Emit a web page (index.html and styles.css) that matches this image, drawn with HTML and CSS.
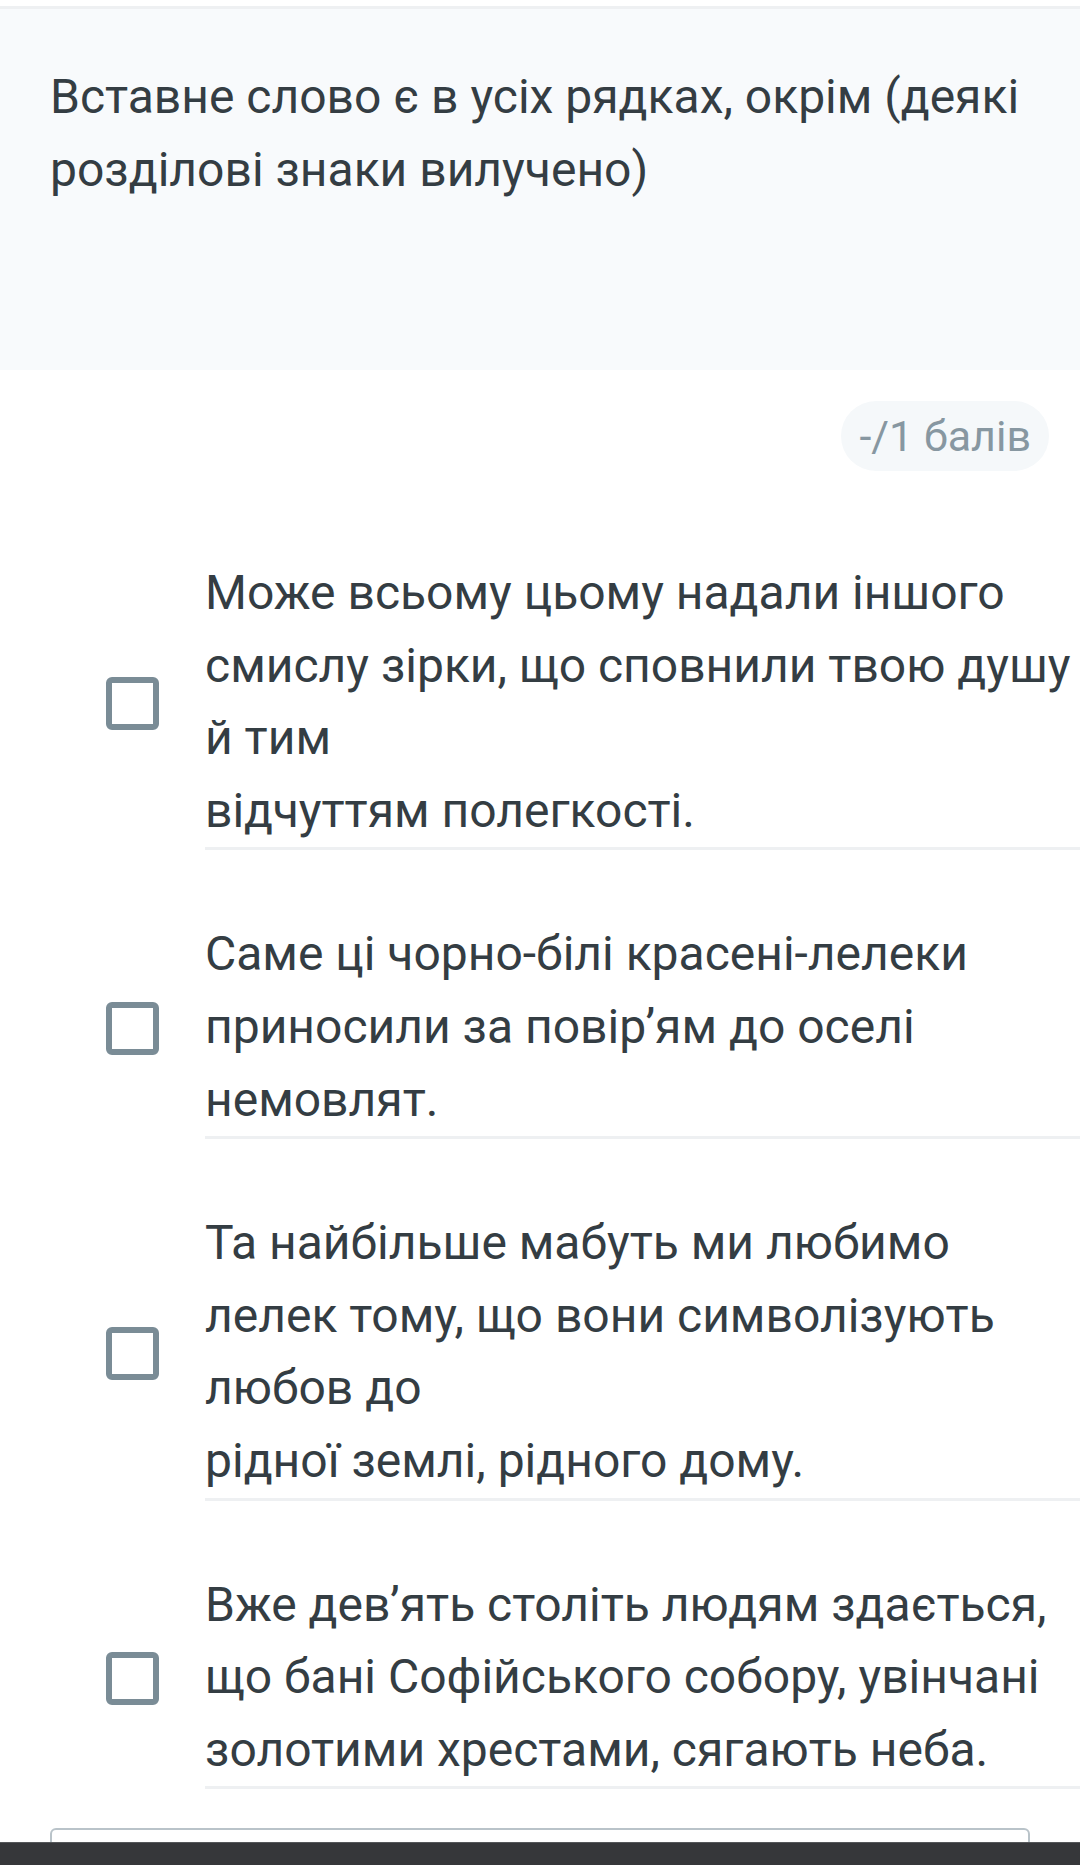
FILE: index.html
```html
<!DOCTYPE html>
<html lang="uk">
<head>
    <meta charset="UTF-8">
    <meta name="viewport" content="width=device-width, initial-scale=1.0">
    <title>Питання</title>
    <link rel="stylesheet" href="styles.css">
</head>
<body>

<!-- Question header -->
<section class="question-head">
    <p class="question-text">Вставне слово є в усіх рядках, окрім (деякі розділові знаки вилучено)</p>
</section>

<div class="points-row">
    <span class="points">-/1 балів</span>
</div>

<!-- Options -->
<ul class="options">
    <li class="option">
        <span class="check"></span>
        <div class="option-text">Може всьому цьому надали іншого смислу зірки, що сповнили твою душу й тим<br>відчуттям полегкості.</div>
    </li>
    <li class="option">
        <span class="check"></span>
        <div class="option-text">Саме ці чорно-білі красені-лелеки приносили за повір’ям до оселі немовлят.</div>
    </li>
    <li class="option">
        <span class="check"></span>
        <div class="option-text">Та найбільше мабуть ми любимо лелек тому, що вони символізують любов до<br>рідної землі, рідного дому.</div>
    </li>
    <li class="option">
        <span class="check"></span>
        <div class="option-text">Вже дев’ять століть людям здається, що бані Софійського собору, увінчані золотими хрестами, сягають неба.</div>
    </li>
</ul>

<div class="answer-box"></div>

<div class="bottom-bar"></div>

</body>
</html>
```

FILE: styles.css
```css
/* Basic Styling */
html, body {
    overflow-x: hidden;
}
body {
    font-family: Roboto, "Noto Sans", Arial, sans-serif;
    background-color: #fff;
    color: #343d43;
    margin: 0;
    padding: 0;
    height: 1865px;
    position: relative;
}
.question-head {
    margin-top: 6px;
    border-top: 3px solid #eef0f2;
    background-color: #f8fafc;
    padding: 51px 20px 164px 50px;
}
.question-text {
    margin: 0;
    font-size: 48px;
    line-height: 73px;
}
.points-row {
    display: flex;
    justify-content: flex-end;
    padding: 31px 31px 0 0;
}
.points {
    background-color: #f5f8fa;
    color: #8797a1;
    font-size: 43px;
    line-height: 70px;
    padding: 0 18px;
    border-radius: 35px;
}
.options {
    list-style: none;
    margin: 18px 0 0 0;
    padding: 0;
}
.option {
    display: flex;
    align-items: center;
    padding-top: 68px;
}
.check {
    flex: none;
    width: 41px;
    height: 41px;
    border: 6px solid #7a8c96;
    border-radius: 6px;
    margin: 0 46px 0 106px;
}
.option-text {
    flex: none;
    width: 877px;
    font-size: 48px;
    line-height: 72.6px;
    border-bottom: 3px solid #eef0f2;
}
.answer-box {
    margin: 39px 50px 0 50px;
    height: 60px;
    border: 2px solid #b9c3c9;
    border-radius: 6px;
}
.bottom-bar {
    position: absolute;
    left: 0;
    right: 0;
    bottom: 0;
    height: 22px;
    background-color: #36373a;
    border-top: 1px solid #55575a;
}
```
